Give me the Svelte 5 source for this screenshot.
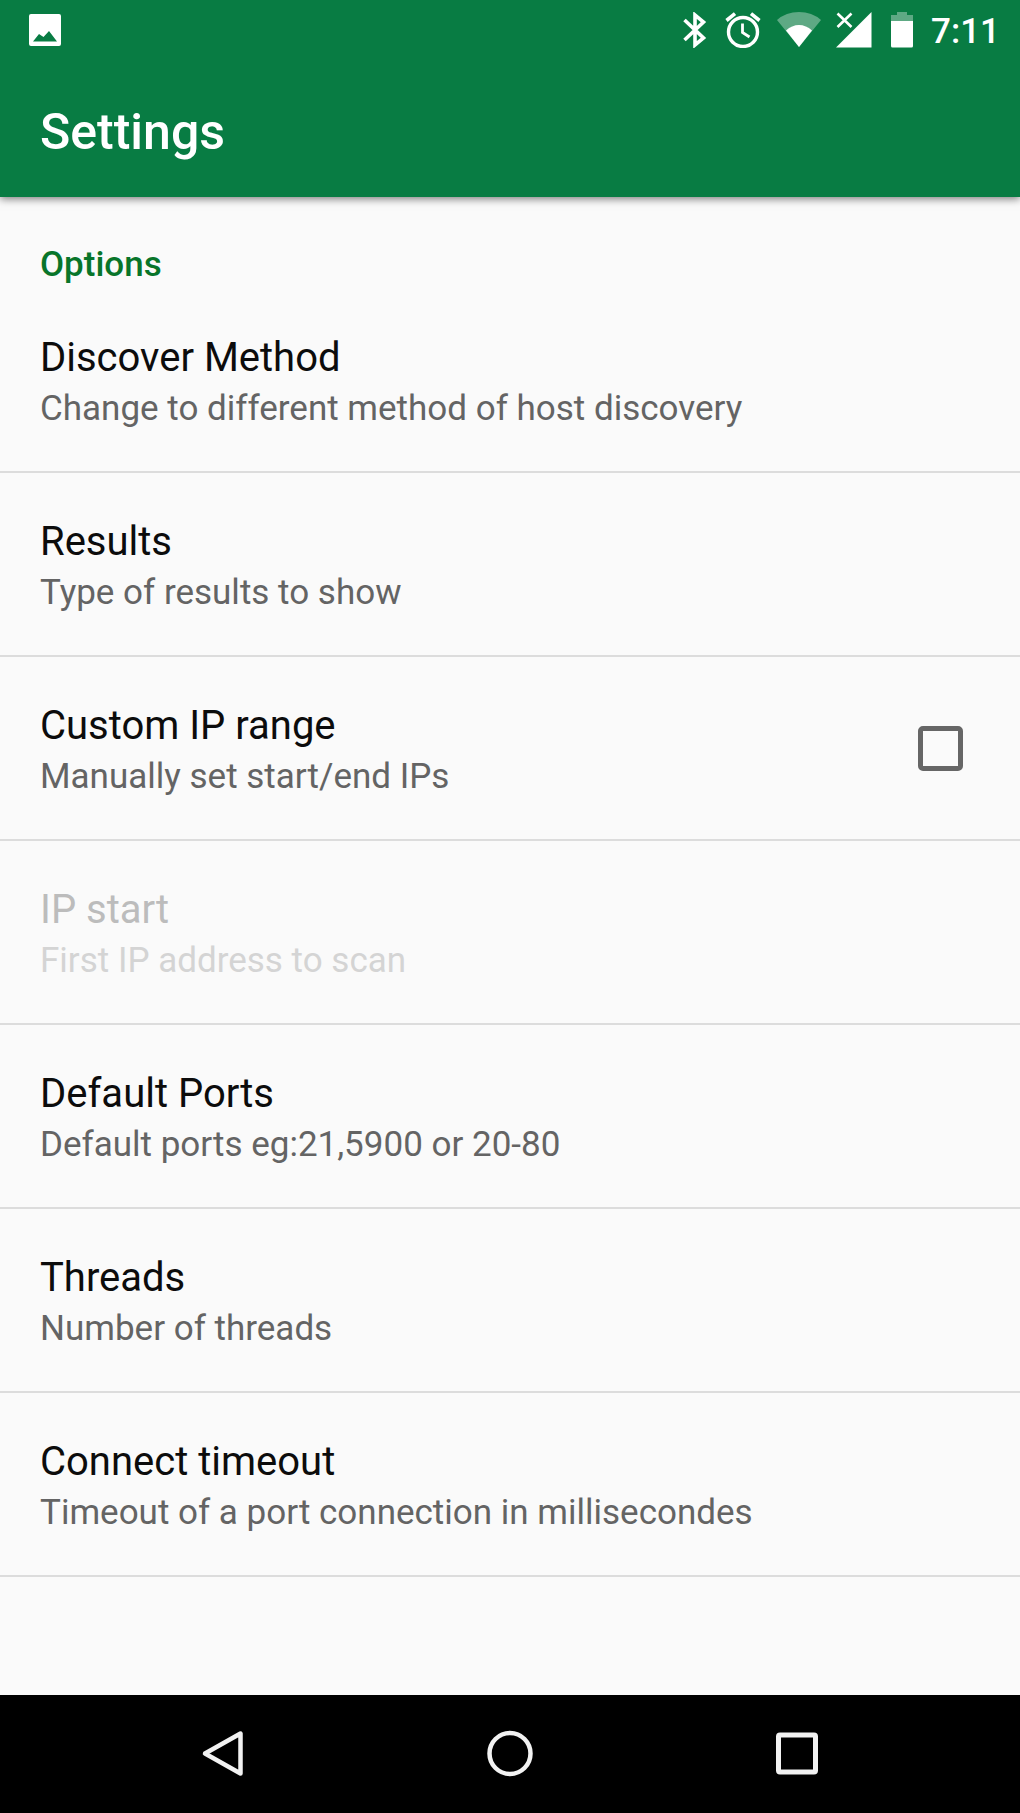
<script lang="ts">
  type Preference = {
    title: string;
    summary: string;
    disabled?: boolean;
    checkbox?: boolean;
  };

  const preferences: Preference[] = [
    { title: 'Discover Method', summary: 'Change to different method of host discovery' },
    { title: 'Results', summary: 'Type of results to show' },
    { title: 'Custom IP range', summary: 'Manually set start/end IPs', checkbox: true },
    { title: 'IP start', summary: 'First IP address to scan', disabled: true },
    { title: 'Default Ports', summary: 'Default ports eg:21,5900 or 20-80' },
    { title: 'Threads', summary: 'Number of threads' },
    { title: 'Connect timeout', summary: 'Timeout of a port connection in millisecondes' }
  ];

  let customRange = $state(false);
</script>

{#snippet labels(item: Preference)}
  <span class="labels">
    <span class="title">{item.title}</span>
    <span class="summary">{item.summary}</span>
  </span>
{/snippet}

<div class="screen">
  <header>
    <div class="status">
      <svg class="photo" width="32" height="32" viewBox="0 0 32 32" aria-hidden="true">
        <path fill="#fff" fill-rule="evenodd" d="M2 0H30Q32 0 32 2V30Q32 32 30 32H2Q0 32 0 30V2Q0 0 2 0ZM4 27.500H28L20 17L14.500 23L10 20Z" />
      </svg>
      <div class="indicators">
        <svg width="24" height="36" viewBox="0 0 24 36" aria-hidden="true">
          <path fill="none" stroke="#fff" stroke-width="3.600" d="M1.500 8L20.500 26L12 33V3L20.500 10L1.500 28" />
        </svg>
        <svg class="alarm" width="36" height="36" viewBox="0 0 36 36" aria-hidden="true">
          <g fill="none" stroke="#fff">
            <circle cx="18" cy="20" r="14.500" stroke-width="3.400" />
            <path stroke-width="3.600" d="M1.500 8.500L10 1.700M34.500 8.500L26 1.700" />
            <path stroke-width="2.800" d="M17.500 11.500V20.500L24.500 25" />
          </g>
        </svg>
        <svg class="wifi" width="44" height="36" viewBox="0 0 44 36" aria-hidden="true">
          <path fill="#fff" opacity=".35" d="M0 8Q9 0 22 0T44 8L22 35Z" />
          <path fill="#fff" d="M9 18.500Q15 13 22 13T35 18.500L22 35Z" />
        </svg>
        <svg class="signal" width="36" height="36" viewBox="0 0 36 36" aria-hidden="true">
          <path fill="#fff" d="M0 35.500L35.500 0V35.500Z" />
          <path fill="none" stroke="#087c43" stroke-width="5" d="M2 2L15 15M15 2L2 15" />
          <path fill="none" stroke="#fff" stroke-width="2.600" d="M1.500 1.500L15.500 15M15.500 1.500L1.500 15" />
        </svg>
        <svg class="battery" width="24" height="36" viewBox="0 0 24 36" aria-hidden="true">
          <path fill="#fff" opacity=".35" d="M7 0H17V3H23V9H1V3H7Z" />
          <path fill="#fff" d="M1 9H23V34Q23 35.500 21.500 35.500H2.500Q1 35.500 1 34Z" />
        </svg>
        <time>7:11</time>
      </div>
    </div>
    <h1>Settings</h1>
  </header>

  <main>
    <h2>Options</h2>
    <ul>
      {#each preferences as item}
        <li>
          {#if item.checkbox}
            <label class="row">
              {@render labels(item)}
              <input type="checkbox" bind:checked={customRange} />
            </label>
          {:else}
            <button class="row" type="button" disabled={item.disabled}>
              {@render labels(item)}
            </button>
          {/if}
        </li>
      {/each}
    </ul>
  </main>

  <nav aria-label="System">
    <button type="button" aria-label="Back">
      <svg width="48" height="48" viewBox="0 0 48 48" aria-hidden="true">
        <path fill="none" stroke="#f2f2f2" stroke-width="4.500" stroke-linejoin="round" d="M41.500 3.500V43.500L6 23.500Z" />
      </svg>
    </button>
    <button type="button" aria-label="Home">
      <svg width="48" height="48" viewBox="0 0 48 48" aria-hidden="true">
        <circle cx="24" cy="23.500" r="20.500" fill="none" stroke="#f2f2f2" stroke-width="4.500" />
      </svg>
    </button>
    <button type="button" aria-label="Recent apps">
      <svg width="48" height="48" viewBox="0 0 48 48" aria-hidden="true">
        <rect x="5.500" y="5" width="37" height="37" rx="1.500" fill="none" stroke="#f2f2f2" stroke-width="5" />
      </svg>
    </button>
  </nav>
</div>

<style>
  :global(body) {
    margin: 0;
    background: #fafafa;
  }

  .screen {
    min-height: 100vh;
    display: flex;
    flex-direction: column;
    font-family: Roboto, "Liberation Sans", sans-serif;
    color: #0c0c0c;
    background: #fafafa;
  }

  header {
    color: #fff;
    background: #087c43;
    box-shadow: 0 2px 8px rgba(0, 0, 0, 0.5);
  }

  .status {
    display: flex;
    align-items: center;
    justify-content: space-between;
    height: 60px;
    padding: 0 20px 0 29px;
  }

  .indicators {
    display: flex;
    align-items: center;
  }

  svg {
    display: block;
    flex: none;
  }

  .alarm {
    margin-left: 18px;
  }

  .wifi {
    margin-left: 16px;
  }

  .signal {
    margin-left: 15px;
  }

  .battery {
    margin: 0 17px 0 18px;
  }

  time {
    padding-top: 3px;
    font-size: 35px;
    line-height: 44px;
    font-weight: 500;
  }

  h1 {
    margin: 0;
    padding: 42px 40px 35px;
    font-size: 50px;
    line-height: 60px;
    font-weight: 500;
  }

  main {
    flex: 1;
  }

  h2 {
    margin: 0;
    padding: 46px 40px 2px;
    font-size: 35px;
    line-height: 44px;
    font-weight: 500;
    color: #08752a;
  }

  ul {
    margin: 0;
    padding: 0;
    list-style: none;
  }

  li {
    border-bottom: 2px solid #dcdcdc;
  }

  button {
    border: 0;
    margin: 0;
    background: none;
    font: inherit;
    color: inherit;
    text-align: left;
  }

  .row {
    box-sizing: border-box;
    width: 100%;
    display: flex;
    align-items: center;
    justify-content: space-between;
    padding: 0 57px 0 40px;
  }

  .labels {
    display: flex;
    flex-direction: column;
    gap: 5px;
    padding: 45px 0 40px;
  }

  .title {
    font-size: 40px;
    line-height: 48px;
  }

  .summary {
    font-size: 35px;
    line-height: 44px;
    color: #646464;
  }

  .row:disabled .title {
    color: #bcbcbc;
  }

  .row:disabled .summary {
    color: #d4d4d4;
  }

  input {
    appearance: none;
    box-sizing: border-box;
    flex: none;
    width: 45px;
    height: 45px;
    margin: 0;
    border: 5px solid #666;
    border-radius: 5px;
  }

  input:checked {
    background: #087c43;
    border-color: #087c43;
  }

  nav {
    display: flex;
    justify-content: center;
    background: #000;
  }

  nav button {
    flex: 0 1 287px;
    display: flex;
    justify-content: center;
    padding: 35px 0;
  }
</style>
